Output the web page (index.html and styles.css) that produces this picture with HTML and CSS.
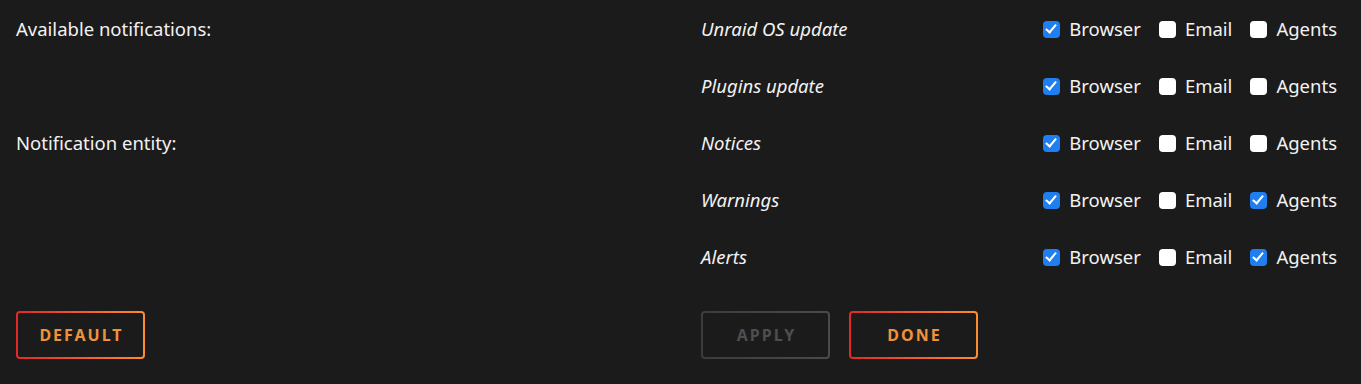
FILE: index.html
```html
<!DOCTYPE html>
<html>
<head>
<meta charset="utf-8">
<link rel="stylesheet" href="styles.css">
</head>
<body>
<div class="page">
  <div class="grid">
    <div class="label">Available notifications:</div>
    <div class="right">
      <div class="row">
        <span class="name">Unraid OS update</span>
        <div class="opts">
          <label class="opt"><input type="checkbox" checked><span>Browser</span></label>
          <label class="opt"><input type="checkbox"><span>Email</span></label>
          <label class="opt"><input type="checkbox"><span>Agents</span></label>
        </div>
      </div>
      <div class="row">
        <span class="name">Plugins update</span>
        <div class="opts">
          <label class="opt"><input type="checkbox" checked><span>Browser</span></label>
          <label class="opt"><input type="checkbox"><span>Email</span></label>
          <label class="opt"><input type="checkbox"><span>Agents</span></label>
        </div>
      </div>
    </div>
    <div class="label">Notification entity:</div>
    <div class="right">
      <div class="row">
        <span class="name">Notices</span>
        <div class="opts">
          <label class="opt"><input type="checkbox" checked><span>Browser</span></label>
          <label class="opt"><input type="checkbox"><span>Email</span></label>
          <label class="opt"><input type="checkbox"><span>Agents</span></label>
        </div>
      </div>
      <div class="row">
        <span class="name">Warnings</span>
        <div class="opts">
          <label class="opt"><input type="checkbox" checked><span>Browser</span></label>
          <label class="opt"><input type="checkbox"><span>Email</span></label>
          <label class="opt"><input type="checkbox" checked><span>Agents</span></label>
        </div>
      </div>
      <div class="row">
        <span class="name">Alerts</span>
        <div class="opts">
          <label class="opt"><input type="checkbox" checked><span>Browser</span></label>
          <label class="opt"><input type="checkbox"><span>Email</span></label>
          <label class="opt"><input type="checkbox" checked><span>Agents</span></label>
        </div>
      </div>
    </div>
    <div class="btncell"><button class="btn">DEFAULT</button></div>
    <div class="btncell btns">
      <button class="btn disabled">APPLY</button>
      <button class="btn">DONE</button>
    </div>
  </div>
</div>
</body>
</html>
```
FILE: styles.css
```css
html, body {
  margin: 0;
  padding: 0;
  background: #1c1b1b;
}
body {
  width: 1361px;
  height: 384px;
  overflow: hidden;
  font-family: "Noto Sans", "Open Sans", sans-serif;
  font-size: 18.5px;
  color: #f2f2f2;
}
.page {
  padding: 16px 24px 0 16px;
}
.grid {
  display: grid;
  grid-template-columns: 685px 1fr;
}
.label {
  height: 25px;
  line-height: 25px;
}
.right {
  display: flex;
  flex-direction: column;
}
.row {
  display: flex;
  align-items: center;
  justify-content: space-between;
  height: 25px;
  margin-bottom: 32px;
}
.name {
  font-style: italic;
  line-height: 25px;
}
.opts {
  display: flex;
  align-items: center;
}
.opt {
  display: flex;
  align-items: center;
  margin-left: 18px;
}
.opt:first-child { margin-left: 0; }
.opt input {
  appearance: none;
  -webkit-appearance: none;
  width: 17px;
  height: 17px;
  margin: 1px 9px 0 0;
  border-radius: 4px;
  background: #ffffff;
  position: relative;
}
.opt input:checked {
  background: #1f7ef0;
}
.opt input:checked::after {
  content: "";
  position: absolute;
  left: 5px;
  top: 1.5px;
  width: 4px;
  height: 9px;
  border: solid #ffffff;
  border-width: 0 2.5px 2.5px 0;
  transform: rotate(40deg);
}
.btns {
  display: flex;
  gap: 19px;
}
.btn {
  width: 129px;
  height: 48px;
  margin-top: 10px;
  border: 2px solid transparent;
  border-radius: 4px;
  background:
    linear-gradient(#1c1b1b, #1c1b1b) padding-box,
    linear-gradient(90deg, #e22828 0, #ff8c2f 100%) border-box;
  color: #f0923a;
  font-family: "Noto Sans", "Open Sans", sans-serif;
  font-weight: bold;
  font-size: 16px;
  letter-spacing: 2px;
  padding: 0 0 0 2px;
  cursor: pointer;
}
.btn.disabled {
  background:
    linear-gradient(#1c1b1b, #1c1b1b) padding-box,
    linear-gradient(90deg, #3c3c3c, #4a4a4a) border-box;
  color: #4e4e4e;
}
```
